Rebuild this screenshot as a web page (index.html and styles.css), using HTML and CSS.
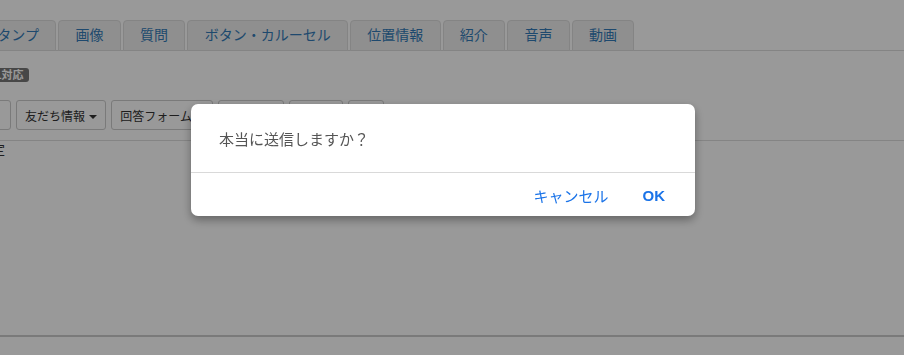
FILE: index.html
```
<!DOCTYPE html>
<html lang="ja">
<head>
    <meta charset="UTF-8">
    <title>メッセージ作成</title>
    <link rel="stylesheet" href="styles.css">
</head>
<body>
    <div class="page">
        <ul class="nav-tabs">
            <li><a href="#">スタンプ</a></li>
            <li><a href="#">画像</a></li>
            <li><a href="#">質問</a></li>
            <li><a href="#">ボタン・カルーセル</a></li>
            <li><a href="#">位置情報</a></li>
            <li><a href="#">紹介</a></li>
            <li><a href="#">音声</a></li>
            <li><a href="#">動画</a></li>
        </ul>

        <div class="label-row">
            <span class="label">HTML対応</span>
        </div>

        <div class="toolbar">
            <button class="btn">名前</button>
            <button class="btn">友だち情報 <span class="caret"></span></button>
            <button class="btn">回答フォーム <span class="caret"></span></button>
            <button class="btn">一斉配信</button>
            <button class="btn">テスト</button>
            <button class="btn btn-icon">…</button>
        </div>

        <div class="editor">
            <div class="editor-text">未設定</div>
        </div>
    </div>

    <!-- 確認ダイアログ -->
    <div class="overlay">
        <div class="dialog">
            <div class="dialog-body">本当に送信しますか？</div>
            <div class="dialog-footer">
                <button class="dialog-btn">キャンセル</button>
                <button class="dialog-btn dialog-ok">OK</button>
            </div>
        </div>
    </div>
</body>
</html>
```

FILE: styles.css
```
body {
    margin: 0;
    background: #fff;
    font-family: "Liberation Sans", "Noto Sans CJK JP", sans-serif;
    color: #333;
    overflow: hidden;
}

.page {
    margin-left: -34px;
    padding-top: 20px;
}

/* タブ */
.nav-tabs {
    list-style: none;
    margin: 0;
    padding: 0;
    display: flex;
    border-bottom: 1px solid #ddd;
}

.nav-tabs li {
    margin-right: 2px;
    margin-bottom: -1px;
}

.nav-tabs a {
    display: block;
    padding: 0 16.3px;
    height: 29px;
    line-height: 29px;
    font-size: 14px;
    color: #337ab7;
    text-decoration: none;
    background: #eee;
    border: 1px solid #ddd;
    border-radius: 4px 4px 0 0;
}

.label-row {
    display: flex;
    margin-top: 17px;
}

.label {
    display: block;
    background: #777;
    color: #fff;
    font-size: 11px;
    font-weight: bold;
    line-height: 14px;
    padding: 0 5px;
    border-radius: 3px;
}

/* ボタン列 */
.toolbar {
    display: flex;
    gap: 5px;
    margin-top: 18px;
}

.btn {
    height: 30px;
    padding: 0 8px;
    font-family: inherit;
    font-size: 12px;
    color: #333;
    background: #fff;
    border: 1px solid #ccc;
    border-radius: 3px;
    white-space: nowrap;
}

.btn:first-child {
    padding-right: 11px;
}

.btn-icon {
    width: 36px;
}

.caret {
    display: inline-block;
    width: 0;
    height: 0;
    margin-left: 1px;
    vertical-align: middle;
    border-top: 4px solid #333;
    border-left: 4px solid transparent;
    border-right: 4px solid transparent;
}

.editor {
    margin-top: 10px;
    height: 194px;
    border-top: 1px solid #ddd;
    border-bottom: 2px solid #ccc;
}

.editor-text {
    font-size: 13px;
    line-height: 18px;
    color: #333;
}

/* 確認ダイアログ */
.overlay {
    position: fixed;
    top: 0;
    left: 0;
    right: 0;
    bottom: 0;
    background: rgba(0, 0, 0, 0.4);
    display: flex;
    align-items: flex-start;
    padding: 104px 0 0 191px;
}

.dialog {
    width: 504px;
    background: #fff;
    border-radius: 7px;
    box-shadow: 0 4px 10px rgba(0, 0, 0, 0.35);
}

.dialog-body {
    padding: 26px 28px 22px;
    font-size: 15px;
    line-height: 20px;
    color: #555;
}

.dialog-footer {
    border-top: 1px solid #d9d9d9;
    height: 44px;
    box-sizing: border-box;
    padding: 2px 30px 0 0;
    display: flex;
    justify-content: flex-end;
    align-items: center;
    gap: 34px;
}

.dialog-btn {
    border: none;
    background: none;
    padding: 0;
    font-family: inherit;
    font-size: 15px;
    color: #1a73e8;
}

.dialog-ok {
    font-weight: bold;
}
```
